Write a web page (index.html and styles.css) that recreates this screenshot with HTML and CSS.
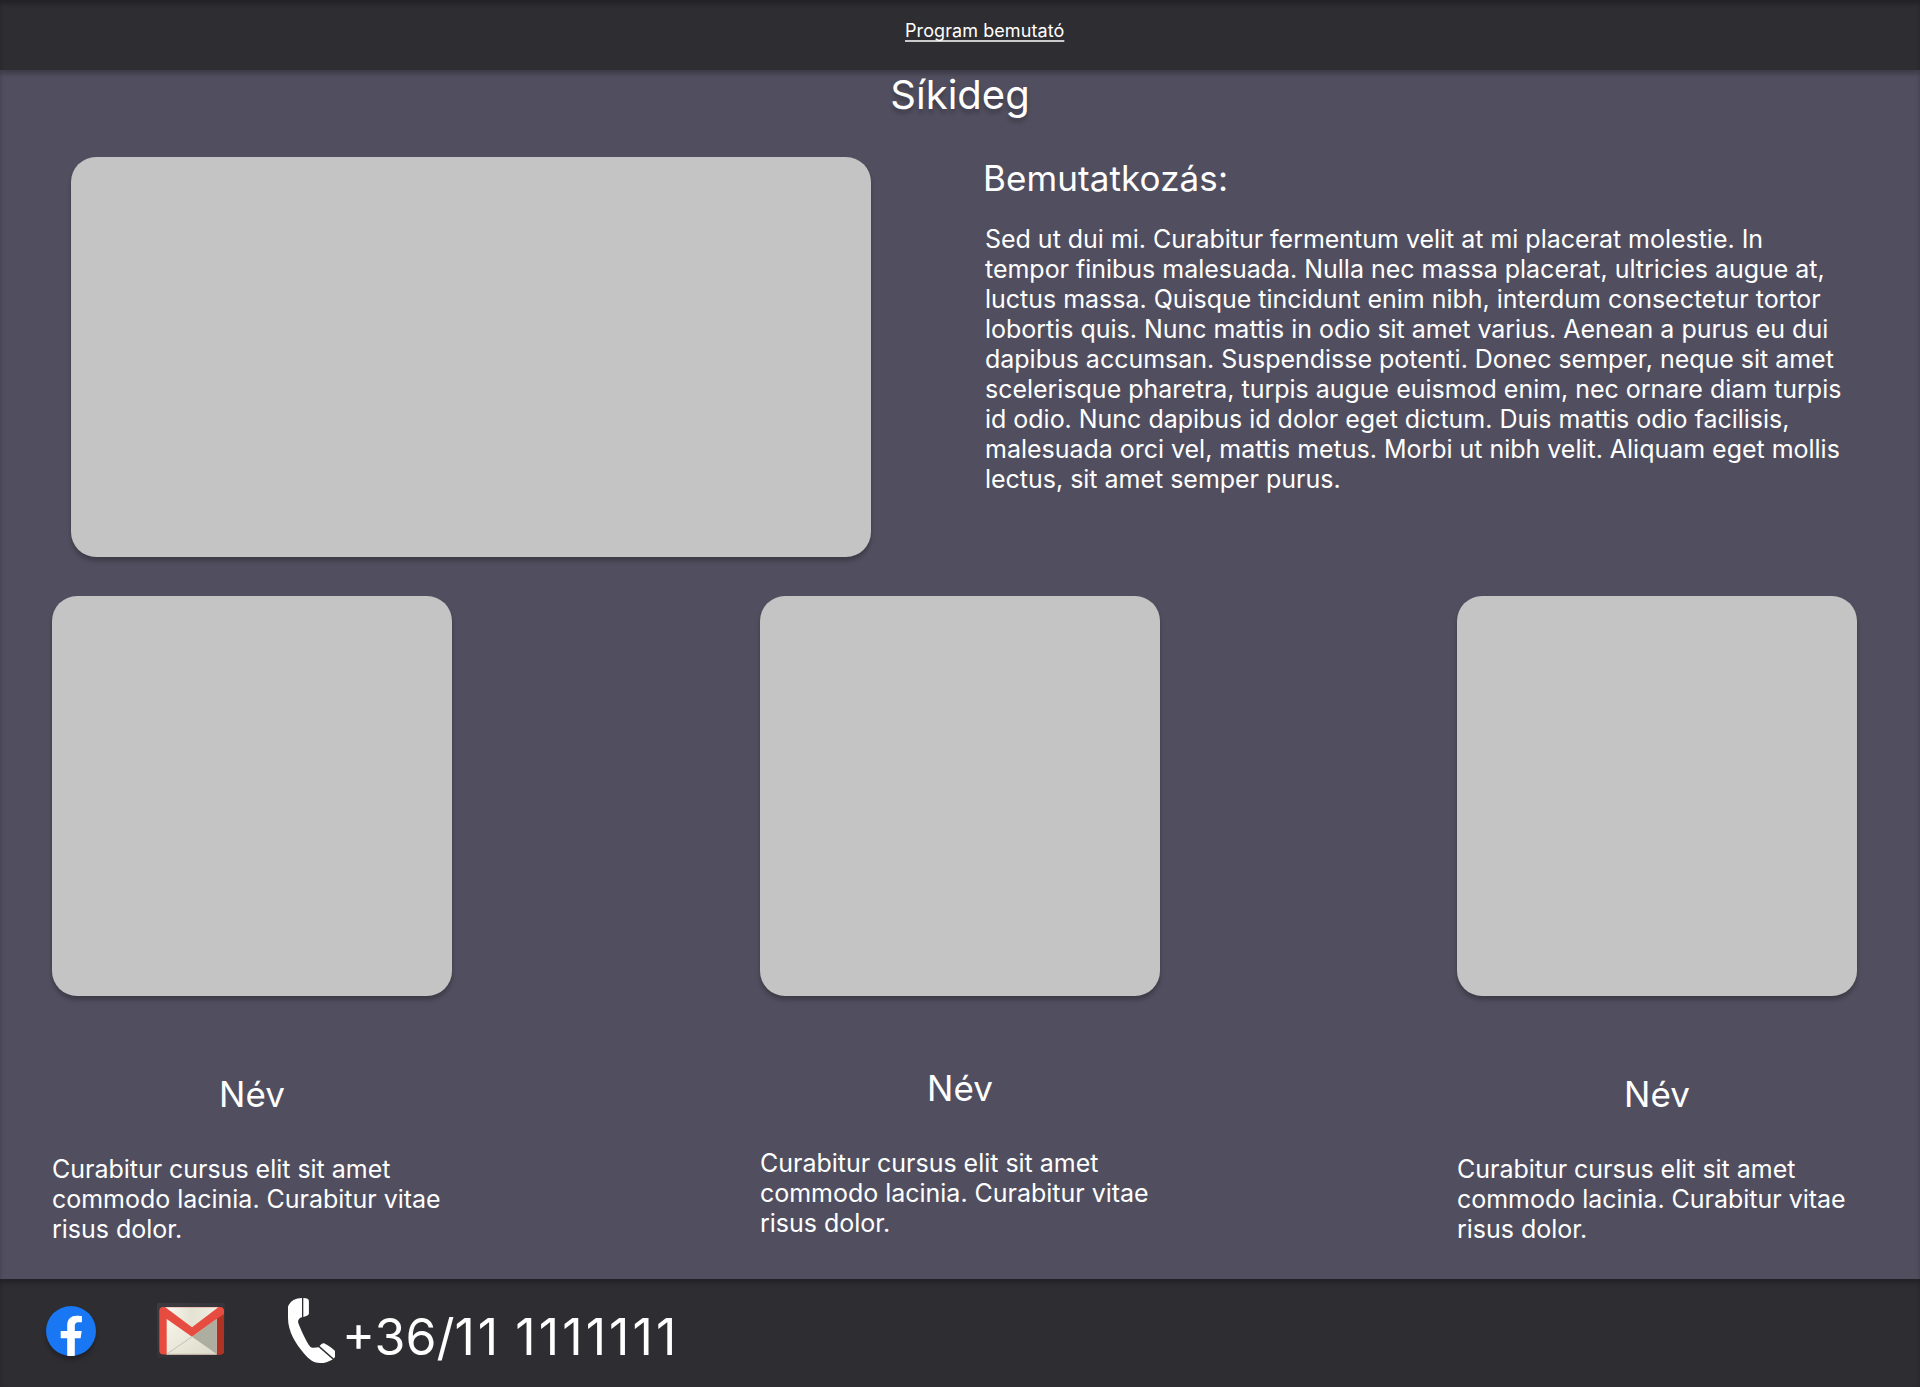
FILE: index.html
```html
<!DOCTYPE html>
<html lang="hu">
<head>
<meta charset="utf-8">
<title>Síkideg</title>
<link rel="stylesheet" href="styles.css">
</head>
<body>
<div class="page">
  <header class="topbar"><a class="nav-link" href="#">Program bemutató</a></header>
  <main class="main">
    <h1 class="title">Síkideg</h1>
    <section class="hero">
      <div class="hero-image"></div>
      <div class="intro">
        <h2 class="heading">Bemutatkozás:</h2>
        <p class="text intro-text">Sed ut dui mi. Curabitur fermentum velit at mi placerat molestie. In<br>tempor finibus malesuada. Nulla nec massa placerat, ultricies augue at,<br>luctus massa. Quisque tincidunt enim nibh, interdum consectetur tortor<br>lobortis quis. Nunc mattis in odio sit amet varius. Aenean a purus eu dui<br>dapibus accumsan. Suspendisse potenti. Donec semper, neque sit amet<br>scelerisque pharetra, turpis augue euismod enim, nec ornare diam turpis<br>id odio. Nunc dapibus id dolor eget dictum. Duis mattis odio facilisis,<br>malesuada orci vel, mattis metus. Morbi ut nibh velit. Aliquam eget mollis<br>lectus, sit amet semper purus.</p>
      </div>
    </section>
    <section class="team">
      <article class="member">
        <div class="photo"></div>
        <h2 class="heading name">Név</h2>
        <p class="text">Curabitur cursus elit sit amet<br>commodo lacinia. Curabitur vitae<br>risus dolor.</p>
      </article>
      <article class="member member-middle">
        <div class="photo"></div>
        <h2 class="heading name">Név</h2>
        <p class="text">Curabitur cursus elit sit amet<br>commodo lacinia. Curabitur vitae<br>risus dolor.</p>
      </article>
      <article class="member">
        <div class="photo"></div>
        <h2 class="heading name">Név</h2>
        <p class="text">Curabitur cursus elit sit amet<br>commodo lacinia. Curabitur vitae<br>risus dolor.</p>
      </article>
    </section>
  </main>
  <footer class="footer">
    <svg class="facebook" viewBox="0 0 50 50"><circle cx="25" cy="25" r="25" fill="#1977f3"/><path fill="#fff" d="M21.200 49.700V32.200h-6.500v-7.300h6.500v-5.400c0-6.500 3.800-9.800 9.400-9.800 2.800 0 5.300.4 5.300.4v6.200h-3.200c-3.100 0-3.900 1.900-3.900 3.900v4.700h6.900l-1.100 7.300h-5.800v17.500a25 25 0 0 1-7.600 0z"/></svg>
    <svg class="gmail" viewBox="0 0 68 55">
      <defs>
        <linearGradient id="paper" x1="0" y1="0" x2="1" y2="1"><stop offset="0" stop-color="#f6f5ea"/><stop offset="1" stop-color="#dcdac8"/></linearGradient>
        <linearGradient id="flap" x1="0" y1="0" x2="1" y2="0"><stop offset="0" stop-color="#fbfaf4"/><stop offset=".5" stop-color="#e4e2d2"/><stop offset="1" stop-color="#f2f0e4"/></linearGradient>
        <linearGradient id="haze" x1="0" y1="0" x2=".7" y2="1"><stop offset="0" stop-color="#3c3b42"/><stop offset="1" stop-color="#2e2d32"/></linearGradient>
      </defs>
      <path fill="url(#haze)" d="M0 0h68v55H0z"/>
      <rect x="2.300" y="4" width="64.700" height="47.500" rx="4" fill="#e64d40"/>
      <path fill="#b03224" d="M59.700 16 67 11v36.500a4 4 0 0 1-4 4h-3.300z"/>
      <path fill="url(#paper)" d="M9.700 16 35 33.700 59.700 16v35.500h-50z"/>
      <path fill="#adada0" d="M35 33.700 59.700 16v35z"/>
      <path fill="none" stroke="#c4c3b2" stroke-width="1" d="M9.700 51.200 35 33.700M9.700 51.200h50"/>
      <path fill="url(#flap)" d="M8.300 4.200h53L35 24.300z"/>
    </svg>
    <svg class="phone" viewBox="0 0 47 65" fill="#fff">
      <path d="M14 0v19.200c-3 .8-4.500 3-3.600 6C12.500 31 18 43 22 48.600c1.300 1.800 5.500 1.200 8.700.7L44.700 61.400C40 63.800 37 65 32 65c-6 0-10.500-3-16-9.500C8 46 0 34 0 20V8.500C2.500 2.800 7.500 0 14 0z"/>
      <path d="M15.300 0C19 0 20.900.9 20.900 3v12.300c0 1.800-2 3.200-5.600 3.600z"/>
      <path d="M31.600 48c1.500-2.200 3.400-3.300 5-2.600 3.300 1.500 7.400 4.600 10.400 7.500V59l-1.200 1.400z"/>
    </svg>
    <span class="phone-number">+36/<span class="digits">11 1111111</span></span>
  </footer>
</div>
</body>
</html>
```
FILE: styles.css
```css
* { box-sizing: border-box; margin: 0; }
body { font-family: Inter, sans-serif; color: #fff; background: #514f5f; }
.page { width: 1920px; height: 1387px; display: flex; flex-direction: column; }
.topbar, .main, .footer { box-shadow: inset 0 4px 4px rgba(0, 0, 0, .25); }
.topbar { height: 70px; background: #2e2d32; padding: 20px 0 0 905px; }
.nav-link { display: block; color: #fff; font-size: 18px; line-height: 22px; letter-spacing: .08px; text-decoration: underline 2px rgba(255, 255, 255, .75); text-underline-offset: 3px; text-decoration-skip-ink: none; }
.main { height: 1209px; padding-top: 1px; }
.title { font-size: 40px; font-weight: 400; line-height: 48px; text-align: center; text-shadow: 0 4px 4px rgba(0, 0, 0, .25); }
.hero { display: flex; gap: 112px; padding: 38px 0 0 71px; }
.hero-image, .photo { border-radius: 25px; background: #c4c4c4; box-shadow: 0 4px 4px rgba(0, 0, 0, .25); }
.hero-image { width: 800px; height: 400px; }
.heading { font-size: 35px; font-weight: 400; line-height: 42px; }
.intro .heading { letter-spacing: .1px; }
.text { font-size: 25px; line-height: 30px; letter-spacing: -.02px; white-space: nowrap; }
.intro-text { margin: 25px 0 0 2px; }
.team { display: flex; padding: 39px 0 0 52px; }
.member { width: 400px; }
.member-middle { margin: 0 297px 0 308px; }
.photo { height: 400px; }
.name { margin: 77px 0 39px; text-align: center; }
.member-middle .name { margin-top: 71px; }
.footer { height: 108px; background: #2e2d32; padding: 19px 46px 0; display: flex; align-items: flex-start; }
.facebook { width: 50px; height: 50px; margin-top: 8px; filter: drop-shadow(0 4px 2px rgba(0, 0, 0, .25)); overflow: visible; }
.gmail { width: 68px; height: 55px; margin: 5px 0 0 61px; }
.phone { width: 47px; height: 65px; margin-left: 63px; }
.phone-number { font-size: 50px; line-height: 60px; margin: 9px 0 0 7px; white-space: nowrap; }
.digits { letter-spacing: 3.1px; word-spacing: -3.1px; }
```
